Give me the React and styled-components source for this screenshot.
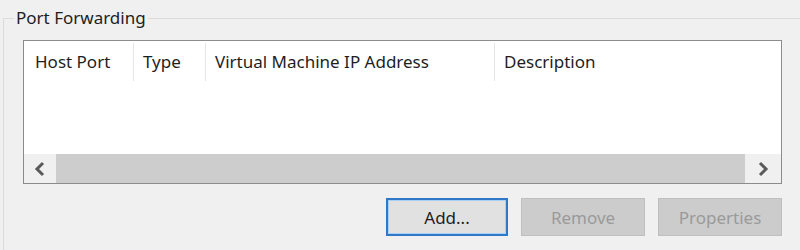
import React from "react";
import styled, { createGlobalStyle } from "styled-components";

const GlobalStyle = createGlobalStyle`
  html, body {
    margin: 0;
    padding: 0;
    background: #f0f0f0;
    overflow: hidden;
  }
  body {
    font-family: "Noto Sans", "Open Sans", sans-serif;
    color: #1e1e1e;
  }
`;

const Page = styled.div`
  width: 800px;
  height: 250px;
  padding: 7px 0 0 3px;
  box-sizing: border-box;
  overflow: hidden;
`;

const GroupBox = styled.fieldset`
  margin: 0;
  width: 840px;
  height: 280px;
  box-sizing: border-box;
  border: 1px solid #dcdcdc;
  padding: 11px 0 0 19px;
  min-width: 0;
`;

const Legend = styled.legend`
  font-size: 17px;
  line-height: 22px;
  padding: 0 2px;
  margin-left: -9px;
  color: #1e1e1e;
`;

const ListView = styled.div`
  width: 759px;
  height: 144px;
  box-sizing: border-box;
  border: 1px solid #8c8c8c;
  background: #fff;
  display: flex;
  flex-direction: column;
`;

const HeaderRow = styled.div`
  display: flex;
  height: 38px;
  padding-top: 2px;
`;

const HeaderCell = styled.div`
  width: ${(p) => p.$w}px;
  flex: ${(p) => (p.$w ? "none" : "1")};
  box-sizing: border-box;
  padding-left: ${(p) => p.$pad || 9}px;
  font-size: 17px;
  line-height: 38px;
  border-right: ${(p) => (p.$last ? "none" : "1px solid #e5e5e5")};
  white-space: nowrap;
`;

const Body = styled.div`
  flex: 1;
`;

const ScrollBar = styled.div`
  display: flex;
  height: 29px;
  background: #f0f0f0;
`;

const ArrowButton = styled.div`
  width: ${(p) => p.$w}px;
  display: flex;
  align-items: center;
  justify-content: center;
  color: #5a5a5a;
`;

const Thumb = styled.div`
  flex: 1;
  background: #cdcdcd;
`;

const ButtonRow = styled.div`
  width: 759px;
  display: flex;
  justify-content: flex-end;
  gap: 13px;
  margin-top: 14px;
`;

const Button = styled.div`
  width: ${(p) => p.$w}px;
  height: 38px;
  box-sizing: border-box;
  display: flex;
  align-items: center;
  justify-content: center;
  font-size: 17px;
  background: ${(p) => (p.$disabled ? "#cccccc" : "#e1e1e1")};
  color: ${(p) => (p.$disabled ? "#9a9a9a" : "#1e1e1e")};
  border: ${(p) =>
    p.$default ? "2px solid #2f78c8" : "1px solid #bfbfbf"};
  box-shadow: ${(p) => (p.$default ? "inset 0 0 0 1px #a8d0f5" : "none")};
`;

const Chevron = ({ dir }) => (
  <svg width="12" height="16" viewBox="0 0 12 16">
    <path
      d={dir === "left" ? "M9 2 L3 8 L9 14" : "M3 2 L9 8 L3 14"}
      fill="none"
      stroke="currentColor"
      strokeWidth="3"
    />
  </svg>
);

export default function App() {
  return (
    <>
      <GlobalStyle />
      <Page>
        <GroupBox>
          <Legend>Port Forwarding</Legend>
          <ListView>
            <HeaderRow>
              <HeaderCell $w={110} $pad={11}>Host Port</HeaderCell>
              <HeaderCell $w={72}>Type</HeaderCell>
              <HeaderCell $w={289}>Virtual Machine IP Address</HeaderCell>
              <HeaderCell $last>Description</HeaderCell>
            </HeaderRow>
            <Body />
            <ScrollBar>
              <ArrowButton $w={32}>
                <Chevron dir="left" />
              </ArrowButton>
              <Thumb />
              <ArrowButton $w={36}>
                <Chevron dir="right" />
              </ArrowButton>
            </ScrollBar>
          </ListView>
          <ButtonRow>
            <Button $w={122} $default>Add...</Button>
            <Button $w={124} $disabled>Remove</Button>
            <Button $w={124} $disabled>Properties</Button>
          </ButtonRow>
        </GroupBox>
      </Page>
    </>
  );
}
